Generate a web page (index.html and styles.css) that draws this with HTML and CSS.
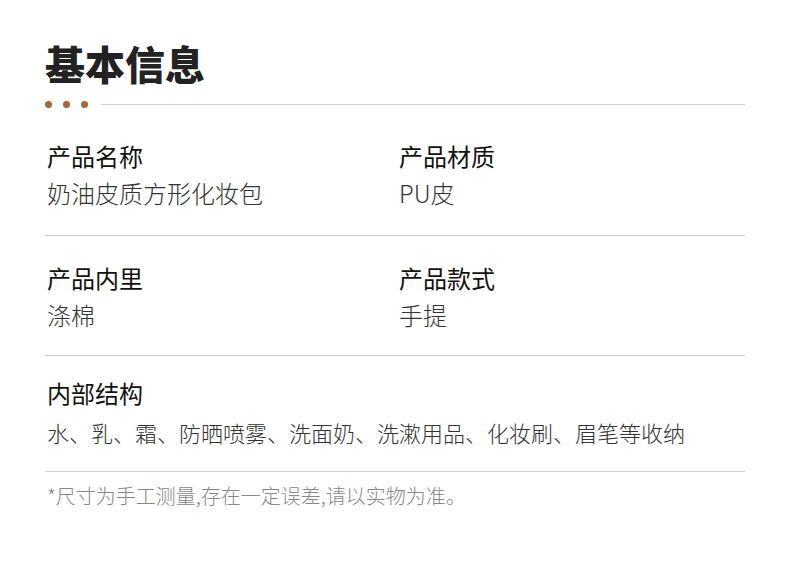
FILE: index.html
```html
<!DOCTYPE html>
<html lang="zh-CN">
<head>
<meta charset="utf-8">
<link rel="stylesheet" href="styles.css">
</head>
<body>
<div class="page">
  <h1 class="title">基本信息</h1>
  <div class="rule">
    <span class="dot"></span><span class="dot"></span><span class="dot"></span>
    <span class="line"></span>
  </div>
  <div class="row row-first">
    <div class="cell">
      <div class="label">产品名称</div>
      <div class="value">奶油皮质方形化妆包</div>
    </div>
    <div class="cell">
      <div class="label">产品材质</div>
      <div class="value">PU皮</div>
    </div>
  </div>
  <div class="row">
    <div class="cell">
      <div class="label">产品内里</div>
      <div class="value">涤棉</div>
    </div>
    <div class="cell">
      <div class="label">产品款式</div>
      <div class="value">手提</div>
    </div>
  </div>
  <div class="row row-single">
    <div class="cell">
      <div class="label">内部结构</div>
      <div class="value value-long">水、乳、霜、防晒喷雾、洗面奶、洗漱用品、化妆刷、眉笔等收纳</div>
    </div>
  </div>
  <p class="note">*尺寸为手工测量,存在一定误差,请以实物为准。</p>
</div>
</body>
</html>
```
FILE: styles.css
```css
html, body {
  margin: 0;
  padding: 0;
  background: #ffffff;
}
body {
  font-family: "Noto Sans CJK SC", "Noto Sans", sans-serif;
  color: #222;
}
.page {
  width: 700px;
  padding: 43px 45px 0;
}
.title {
  margin: 0;
  font-size: 40px;
  line-height: 40px;
  font-weight: 900;
  color: #222;
}
.rule {
  display: flex;
  align-items: center;
  height: 7px;
  margin-top: 18px;
}
.dot {
  width: 7px;
  height: 7px;
  border-radius: 50%;
  background: #a5683b;
  margin-right: 11px;
}
.line {
  flex: 1;
  height: 1px;
  background: #cfcfcf;
  margin-left: 2px;
}
.row {
  display: grid;
  grid-template-columns: 352px 1fr;
  padding: 25px 0 23px 2px;
  border-bottom: 1px solid #d0d0d0;
}
.row-first {
  padding-top: 31px;
  padding-bottom: 25px;
}
.row-single {
  grid-template-columns: 1fr;
  padding-top: 20px;
  padding-bottom: 22px;
}
.label {
  font-size: 24px;
  line-height: 34px;
  font-weight: 400;
  color: #111;
}
.value {
  margin-top: 3px;
  font-size: 24px;
  line-height: 34px;
  font-weight: 300;
  color: #333;
}
.value-long {
  font-size: 22px;
  margin-top: 5px;
}
.note {
  margin: 0;
  padding: 9px 0 0 2px;
  font-size: 20px;
  line-height: 30px;
  font-weight: 300;
  color: #888;
}
```
